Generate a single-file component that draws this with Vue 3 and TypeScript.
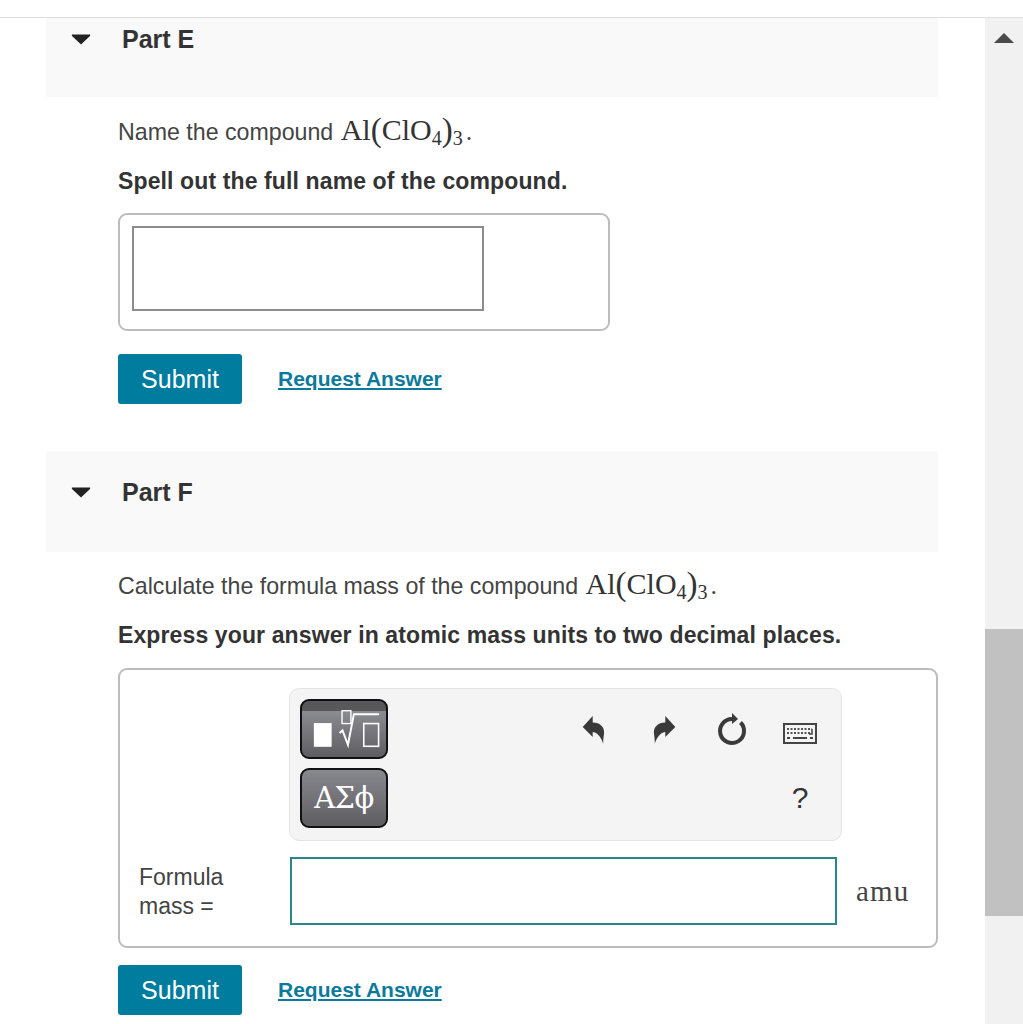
<script setup lang="ts">
const formula = { metal: 'Al', anion: 'ClO', anionCount: '4', groupCount: '3' };
</script>

<template>
  <div class="page">
    <div class="topbar"></div>
    <div class="body-row">
      <main class="content">
        <section class="part">
          <header class="part-head part-head-cut">
            <svg class="caret" width="20" height="11" viewBox="0 0 20 11"><path d="M1 0.5 H19 Q19.5 1 19 2 L10 10.5 L1 2 Q0.5 1 1 0.5 Z" fill="#222" /></svg>
            <h2 class="part-title">Part E</h2>
          </header>
          <p class="prompt">
            Name the compound
            <span class="math">{{ formula.metal }}<span class="paren">(</span>{{ formula.anion }}<sub>{{ formula.anionCount }}</sub><span class="paren">)</span><sub>{{ formula.groupCount }}</sub></span><span class="dot">.</span>
          </p>
          <p class="instruction">Spell out the full name of the compound.</p>
          <div class="answer-box small">
            <input class="text-input" type="text" aria-label="Compound name" />
          </div>
          <div class="actions">
            <button class="submit" type="button">Submit</button>
            <a class="request" href="#">Request Answer</a>
          </div>
        </section>

        <section class="part part-f">
          <header class="part-head">
            <svg class="caret" width="20" height="11" viewBox="0 0 20 11"><path d="M1 0.5 H19 Q19.5 1 19 2 L10 10.5 L1 2 Q0.5 1 1 0.5 Z" fill="#222" /></svg>
            <h2 class="part-title">Part F</h2>
          </header>
          <p class="prompt prompt-f">
            Calculate the formula mass of the compound
            <span class="math">{{ formula.metal }}<span class="paren">(</span>{{ formula.anion }}<sub>{{ formula.anionCount }}</sub><span class="paren">)</span><sub>{{ formula.groupCount }}</sub></span><span class="dot">.</span>
          </p>
          <p class="instruction">Express your answer in atomic mass units to two decimal places.</p>
          <div class="answer-box large">
            <div class="toolbar">
              <div class="tool-buttons">
                <button class="tool-btn templates" type="button" aria-label="Templates">
                  <svg width="85" height="58" viewBox="0 0 85 58">
                    <rect x="12" y="23" width="18" height="24" fill="#fff" />
                    <rect x="40.5" y="10.5" width="9" height="13" fill="none" stroke="#fff" stroke-width="1.4" />
                    <path d="M38 33 L41 30.5 L46.5 45 L52.5 14 H78" fill="none" stroke="#fff" stroke-width="2" />
                    <rect x="62.5" y="23.5" width="15" height="23" fill="none" stroke="#fff" stroke-width="1.6" />
                  </svg>
                </button>
                <button class="tool-btn symbols" type="button">ΑΣϕ</button>
              </div>
              <div class="tool-icons">
                <span class="icon-cell undo">
                  <svg width="24" height="32" viewBox="0 0 24 32" fill="#3a3a3a">
                    <path d="M0.7 13 L10.7 2 V8.5 C18 8.5 23 13 22 20 C21.5 24 21 27 21.3 29.7 C19.5 25 17 19 10.7 18 V23 Z" />
                  </svg>
                </span>
                <span class="icon-cell">
                  <svg width="24" height="32" viewBox="0 0 24 32" fill="#3a3a3a">
                    <path d="M23.3 13 L13.3 2 V8.5 C6 8.5 1 13 2 20 C2.5 24 3 27 2.7 29.7 C4.5 25 7 19 13.3 18 V23 Z" />
                  </svg>
                </span>
                <span class="icon-cell reload">
                  <svg width="32" height="36" viewBox="0 0 32 36">
                    <path d="M24.5 11.5 A12 12 0 1 1 16 8" fill="none" stroke="#3a3a3a" stroke-width="4" />
                    <path d="M16 2 L22 8 L16 13 Z" fill="#3a3a3a" />
                  </svg>
                </span>
                <span class="icon-cell keys">
                  <svg width="34" height="21" viewBox="0 0 34 21">
                    <rect x="1" y="1" width="32" height="19" fill="#f4f4f4" stroke="#444" stroke-width="2" />
                    <path d="M4 6 H29" stroke="#555" stroke-width="2" stroke-dasharray="2 1.5" fill="none" />
                    <path d="M4 10 H27" stroke="#555" stroke-width="2" stroke-dasharray="2 1.5" fill="none" />
                    <path d="M29 6 V11 H26" stroke="#444" stroke-width="1.5" fill="none" />
                    <path d="M4 15 H7 M10 15 H24 M27 15 H30" stroke="#444" stroke-width="2" fill="none" />
                  </svg>
                </span>
                <span class="icon-cell"></span>
                <span class="icon-cell"></span>
                <span class="icon-cell"></span>
                <span class="icon-cell help">?</span>
              </div>
            </div>
            <div class="answer-row">
              <label class="answer-label" for="mass">Formula<br />mass =</label>
              <input id="mass" class="mass-input" type="text" />
              <span class="unit">amu</span>
            </div>
          </div>
          <div class="actions actions-tight">
            <button class="submit" type="button">Submit</button>
            <a class="request" href="#">Request Answer</a>
          </div>
        </section>
      </main>

      <aside class="scrollbar">
        <span class="scroll-up"></span>
        <span class="scroll-thumb"></span>
      </aside>
    </div>
  </div>
</template>

<style>
html, body { margin: 0; background: #fff; overflow: hidden; }
</style>

<style scoped>
.page {
  width: 1023px; height: 1024px; overflow: hidden; display: flex; flex-direction: column;
  font-family: "Liberation Sans", Arial, sans-serif; color: #333;
}
.topbar { height: 17px; flex: none; border-bottom: 1px solid #dedede; box-sizing: content-box; }
.body-row { flex: 1; display: flex; min-height: 0; }
.content { width: 892px; margin-left: 46px; margin-right: 47px; flex: none; }

.part-head {
  height: 101px; box-sizing: border-box; background: #f9f9f9;
  display: flex; align-items: flex-start; padding: 26px 0 0 25px;
}
.part-head-cut { height: 79px; padding-top: 6px; }
.caret { margin-top: 10px; margin-right: 31px; flex: none; }
.part-title { margin: 0; font-size: 25px; line-height: 30px; font-weight: 700; color: #333; }
.part-f { margin-top: 47px; }

.prompt {
  margin: 15px 0 0 72px; height: 36px; line-height: 36px; font-size: 23.2px; color: #444; white-space: nowrap;
}
.prompt-f { margin-top: 14px; }
.math { font-family: "Liberation Serif", "Times New Roman", serif; font-size: 30px; color: #333; margin-left: 1px; }
.math sub { font-size: 20px; line-height: 0; vertical-align: -5px; }
.paren { font-size: 33px; line-height: 0; font-weight: 400; vertical-align: -1px; }
.dot { font-family: "Liberation Serif", serif; font-size: 26px; margin-left: 3px; }
.instruction {
  margin: 19px 0 0 72px; line-height: 28px; font-size: 23px; font-weight: 700; color: #333;
  letter-spacing: 0.12px; white-space: nowrap;
}

.answer-box { margin: 18px 0 0 72px; border: 2px solid #bcbcbc; border-radius: 9px; box-sizing: border-box; }
.answer-box.small { width: 492px; height: 118px; padding: 11px 12px; }
.answer-box.large { width: 820px; height: 280px; padding: 18px 0 0 19px; margin-top: 19px; }
.text-input {
  display: block; width: 352px; height: 85px; box-sizing: border-box; margin: 0; padding: 0;
  border: 2px solid #8c8c8c; background: #fff; outline: none;
}

.actions { display: flex; align-items: center; gap: 36px; margin: 23px 0 0 72px; }
.actions-tight { margin-top: 17px; }
.submit {
  width: 124px; height: 50px; border: none; border-radius: 3px; background: #007c9e; color: #fff;
  font-family: inherit; font-size: 25px; padding: 0;
}
.request { font-size: 21px; font-weight: 700; color: #0b7a9c; text-decoration: underline; }

.toolbar {
  width: 553px; height: 153px; box-sizing: border-box; margin-left: 150px; padding: 10px 7px 0 10px;
  background: #f4f4f4; border: 1px solid #e4e4e4; border-radius: 10px; display: flex; justify-content: space-between;
}
.tool-buttons { display: flex; flex-direction: column; gap: 9px; }
.tool-btn {
  width: 88px; height: 60px; box-sizing: border-box; padding: 0; border: 2px solid #111; border-radius: 9px;
  display: flex; align-items: center; justify-content: center; color: #fff;
}
.templates { background: linear-gradient(#58585a 0 10px, #8b8b92 10px, #5e5e62 100%); }
.symbols {
  background: linear-gradient(#87878e, #5e5e62);
  font-family: "DejaVu Serif", "Liberation Serif", serif; font-size: 29px; letter-spacing: -0.5px;
}
.tool-icons { display: grid; grid-template-columns: repeat(4, 68px); grid-template-rows: 60px 60px; row-gap: 9px; }
.icon-cell { display: flex; align-items: center; justify-content: center; padding-top: 2px; }
.undo { padding-right: 5px; }
.reload { padding-top: 0; }
.keys { padding-top: 8px; }
.help { padding-top: 0; font-size: 30px; color: #333; }

.answer-row { display: flex; align-items: center; margin-top: 16px; }
.answer-label { width: 151px; font-size: 23px; line-height: 29px; color: #444; flex: none; padding-top: 2px; box-sizing: border-box; }
.mass-input {
  width: 547px; height: 68px; box-sizing: border-box; margin: 0; padding: 0;
  border: 2px solid #2b868c; background: #fff; outline: none; flex: none;
}
.unit { margin-left: 19px; font-family: "Liberation Serif", serif; font-size: 29px; color: #444; letter-spacing: 1.2px; }

.scrollbar { width: 38px; flex: none; background: #f1f1f1; display: flex; flex-direction: column; align-items: center; }
.scroll-up {
  width: 0; height: 0; margin-top: 15px;
  border-left: 10px solid transparent; border-right: 10px solid transparent; border-bottom: 10px solid #4a4a4a;
}
.scroll-thumb { width: 38px; height: 287px; margin-top: 586px; background: #c1c1c1; }
</style>
